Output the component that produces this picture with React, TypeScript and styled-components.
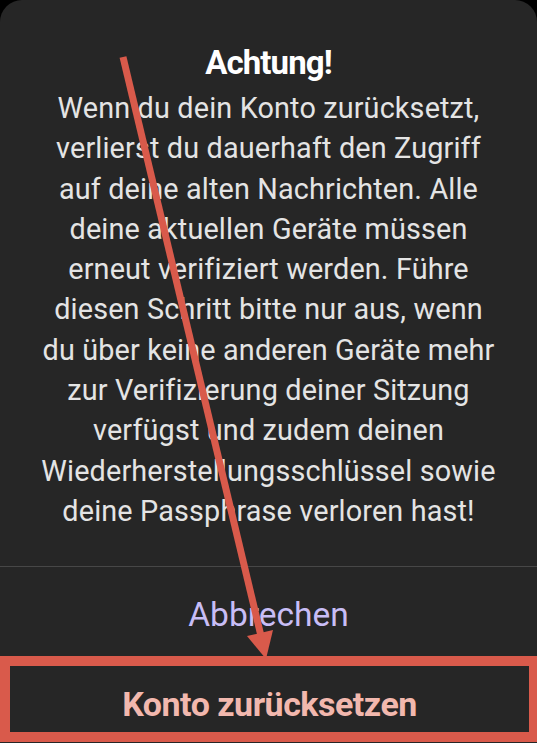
import styled, { createGlobalStyle } from "styled-components";
import { FC } from "react";

const GlobalStyle = createGlobalStyle`
  html, body {
    margin: 0;
    padding: 0;
    background: #000000;
  }
  body {
    font-family: Roboto, "Noto Sans", "Liberation Sans", sans-serif;
  }
`;

const Screen = styled.div`
  position: relative;
  width: 537px;
  height: 743px;
  overflow: hidden;
`;

const Dialog = styled.div`
  height: 743px;
  background: #262626;
  border-radius: 22px 22px 0 0;
  display: flex;
  flex-direction: column;
  padding-top: 45px;
  box-sizing: border-box;
`;

const Title = styled.h2`
  margin: 0;
  text-align: center;
  color: #ffffff;
  font-size: 33px;
  line-height: 36px;
  font-weight: 700;
  letter-spacing: -0.9px;
`;

const Message = styled.p`
  margin: 7px 0 0;
  padding: 0 8px;
  text-align: center;
  color: #e4e4e4;
  font-size: 28.8px;
  line-height: 40.3px;
  letter-spacing: 0.15px;
`;

const Divider = styled.hr`
  margin: 35px 0 0;
  border: 0;
  border-top: 1.5px solid #474747;
`;

const ActionButton = styled.button<{ $danger?: boolean }>`
  display: flex;
  align-items: center;
  justify-content: center;
  width: 100%;
  height: ${(p) => (p.$danger ? "86px" : "89px")};
  background: transparent;
  font-family: inherit;
  font-size: ${(p) => (p.$danger ? "34px" : "33.5px")};
  font-weight: ${(p) => (p.$danger ? 700 : 400)};
  color: ${(p) => (p.$danger ? "#f2b8ae" : "#c8bdf6")};
  letter-spacing: ${(p) => (p.$danger ? "-0.5px" : "0")};
  border: 0;
  padding: ${(p) => (p.$danger ? "9px 0 0" : "6px 0 0")};
  box-sizing: border-box;
  ${(p) =>
    p.$danger &&
    `
    border-style: solid;
    border-color: #d95a4b;
    border-width: 10px 8px 10px 10px;
  `}
`;

const ArrowOverlay = styled.svg`
  position: absolute;
  left: 0;
  top: 0;
  pointer-events: none;
`;

const lines = [
  "Wenn du dein Konto zurücksetzt,",
  "verlierst du dauerhaft den Zugriff",
  "auf deine alten Nachrichten. Alle",
  "deine aktuellen Geräte müssen",
  "erneut verifiziert werden. Führe",
  "diesen Schritt bitte nur aus, wenn",
  "du über keine anderen Geräte mehr",
  "zur Verifizierung deiner Sitzung",
  "verfügst und zudem deinen",
  "Wiederherstellungsschlüssel sowie",
  "deine Passphrase verloren hast!",
];

const App: FC = () => {
  return (
    <Screen>
      <GlobalStyle />
      <Dialog>
        <Title>Achtung!</Title>
        <Message>
          {lines.map((line, i) => (
            <span key={i}>
              {line}
              {i < lines.length - 1 && <br />}
            </span>
          ))}
        </Message>
        <Divider />
        <ActionButton>Abbrechen</ActionButton>
        <ActionButton $danger>Konto zurücksetzen</ActionButton>
      </Dialog>
      <ArrowOverlay width="537" height="743" viewBox="0 0 537 743">
        <line
          x1="123"
          y1="57"
          x2="261"
          y2="636"
          stroke="#d95a4b"
          strokeWidth="7"
        />
        <polygon points="247,636 273,630 266,659" fill="#d95a4b" />
      </ArrowOverlay>
    </Screen>
  );
};

export default App;
